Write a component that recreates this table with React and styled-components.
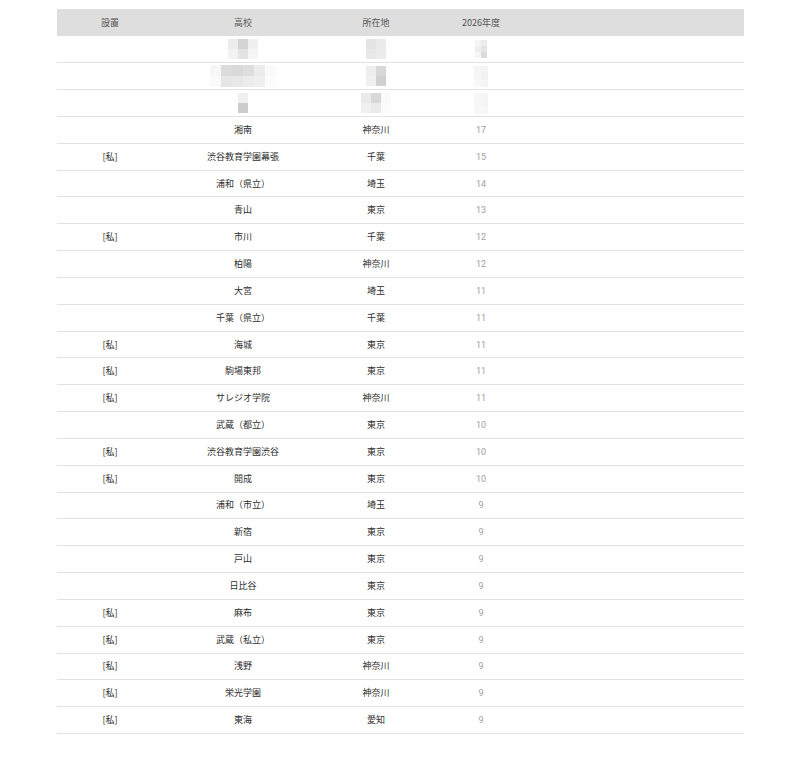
import React from 'react'
import styled, { createGlobalStyle } from 'styled-components'

const GlobalStyle = createGlobalStyle`
body {
  margin: 0;
  background: #fff;
  font-family: "Noto Sans CJK JP", "Noto Sans", sans-serif;
}
`

const Page = styled.div`
padding: 9px 48px 0 57px;
`

const Table = styled.table`
width: 687px;
border-collapse: collapse;
table-layout: fixed;
font-size: 9px;
`

const HeadRow = styled.tr`
background: #dedede;
height: 27px;
`

const Th = styled.th`
font-weight: 400;
color: #555;
text-align: center;
padding: 0;
width: ${props => props.w ? props.w + 'px' : 'auto'};
`

const Row = styled.tr`
height: 26.84px;
border-bottom: 1px solid #e2e2e2;
`

const Td = styled.td`
padding: 0;
height: 25.84px;
line-height: 12px;
text-align: center;
vertical-align: middle;
color: ${props => props.num ? '#a0a0a0' : '#2e2e2e'};
font-family: ${props => props.num ? 'Roboto, "Noto Sans", sans-serif' : 'inherit'};
`

const MosaicBox = styled.div`
display: inline-grid;
grid-template-columns: repeat(${props => props.cols}, ${props => props.size}px);
grid-auto-rows: ${props => props.size}px;
vertical-align: middle;
`

const Tile = styled.div`
background: ${props => props.c};
`

function Mosaic({ cols, size, colors }) {
  return (
    <MosaicBox cols={cols} size={size}>
      {colors.map((c, i) => <Tile key={i} c={c} />)}
    </MosaicBox>
  )
}

const blurred = [
  {
    school: { cols: 3, size: 10, colors: ['#ececec', '#d4d4d4', '#f0f0f0', '#f3f3f3', '#e3e3e3', '#f5f5f5'] },
    place: { cols: 2, size: 10, colors: ['#e4e4e4', '#eaeaea', '#e8e8e8', '#ececec'] },
    year: { cols: 2, size: 6, colors: ['#f4f4f4', '#ececec', '#eeeeee', '#e4e4e4', '#f6f6f6', '#dcdcdc'] },
  },
  {
    school: { cols: 6, size: 11, colors: ['#f7f7f7', '#dcdcdc', '#d9d9d9', '#dedede', '#ececec', '#fafafa', '#fafafa', '#e6e6e6', '#e8e8e8', '#ececec', '#efefef', '#fcfcfc'] },
    place: { cols: 2, size: 10, colors: ['#eeeeee', '#d8d8d8', '#f0f0f0', '#d0d0d0'] },
    year: { cols: 2, size: 7, colors: ['#f6f6f6', '#f3f3f3', '#f6f6f6', '#f2f2f2', '#f8f8f8', '#f5f5f5'] },
  },
  {
    school: { cols: 1, size: 10, colors: ['#efefef', '#cccccc'] },
    place: { cols: 3, size: 10, colors: ['#eaeaea', '#d8d8d8', '#fafafa', '#f0f0f0', '#eaeaea', '#fcfcfc'] },
    year: { cols: 2, size: 7, colors: ['#f7f7f7', '#f5f5f5', '#f6f6f6', '#f4f4f4', '#f8f8f8', '#f7f7f7'] },
  },
]

const rows = [
  ['', '湘南', '神奈川', 17],
  ['[私]', '渋谷教育学園幕張', '千葉', 15],
  ['', '浦和（県立）', '埼玉', 14],
  ['', '青山', '東京', 13],
  ['[私]', '市川', '千葉', 12],
  ['', '柏陽', '神奈川', 12],
  ['', '大宮', '埼玉', 11],
  ['', '千葉（県立）', '千葉', 11],
  ['[私]', '海城', '東京', 11],
  ['[私]', '駒場東邦', '東京', 11],
  ['[私]', 'サレジオ学院', '神奈川', 11],
  ['', '武蔵（都立）', '東京', 10],
  ['[私]', '渋谷教育学園渋谷', '東京', 10],
  ['[私]', '開成', '東京', 10],
  ['', '浦和（市立）', '埼玉', 9],
  ['', '新宿', '東京', 9],
  ['', '戸山', '東京', 9],
  ['', '日比谷', '東京', 9],
  ['[私]', '麻布', '東京', 9],
  ['[私]', '武蔵（私立）', '東京', 9],
  ['[私]', '浅野', '神奈川', 9],
  ['[私]', '栄光学園', '神奈川', 9],
  ['[私]', '東海', '愛知', 9],
]

export default function App() {
  return (
    <Page>
      <GlobalStyle />
      <Table>
        <thead>
          <HeadRow>
            <Th w={106}>設置</Th>
            <Th w={160}>高校</Th>
            <Th w={106}>所在地</Th>
            <Th w={104}>2026年度</Th>
            <Th></Th>
          </HeadRow>
        </thead>
        <tbody>
          {blurred.map((b, i) => (
            <Row key={'b' + i}>
              <Td></Td>
              <Td><Mosaic {...b.school} /></Td>
              <Td><Mosaic {...b.place} /></Td>
              <Td num><Mosaic {...b.year} /></Td>
              <Td></Td>
            </Row>
          ))}
          {rows.map((r, i) => (
            <Row key={i}>
              <Td>{r[0]}</Td>
              <Td>{r[1]}</Td>
              <Td>{r[2]}</Td>
              <Td num>{r[3]}</Td>
              <Td></Td>
            </Row>
          ))}
        </tbody>
      </Table>
    </Page>
  )
}
